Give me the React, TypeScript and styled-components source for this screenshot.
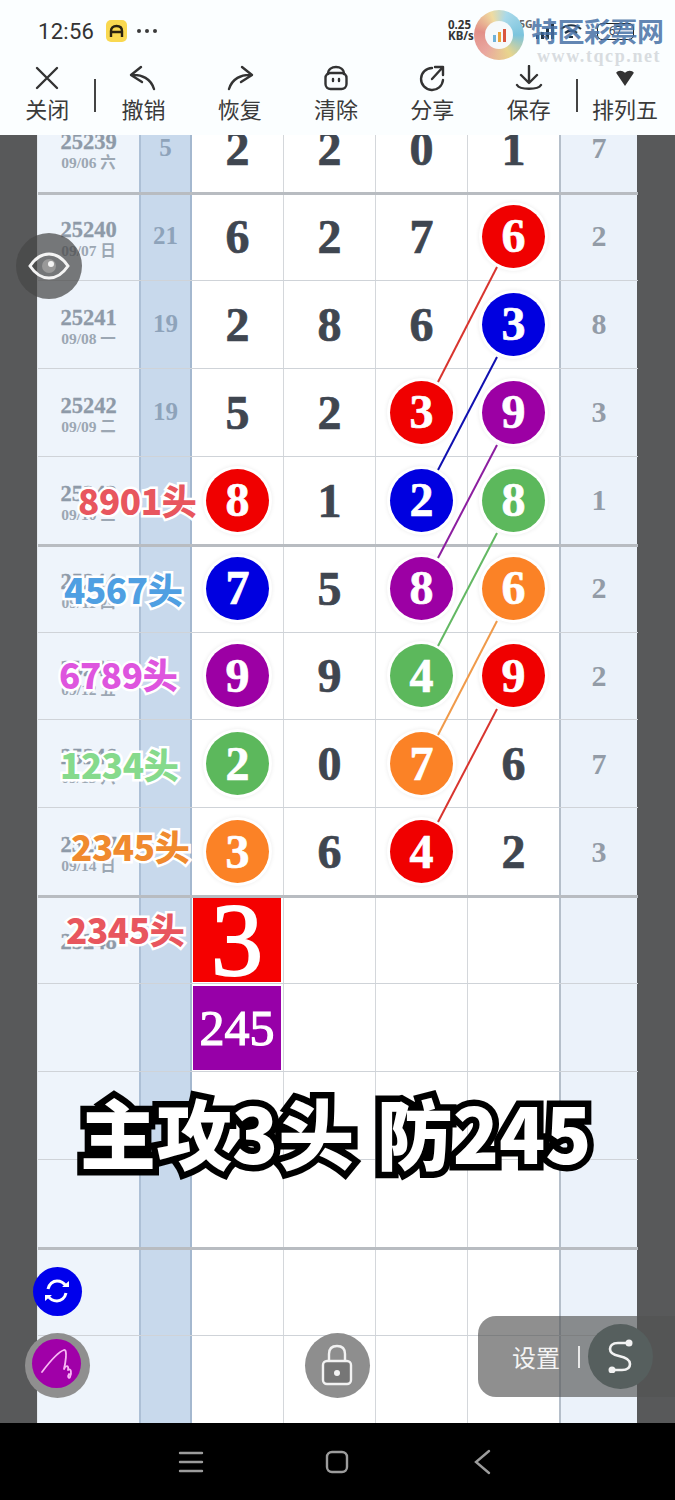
import React from "react";
import styled, { createGlobalStyle } from "styled-components";

const COLS = "101px 53px 92px 92px 92px 93px 76px";
const SERIF = `"Liberation Serif", "Noto Sans CJK SC", serif`;
const SANS = `"Noto Sans CJK SC", "Noto Sans", sans-serif`;

const Global = createGlobalStyle`
  html, body { margin: 0; padding: 0; background: #fff; }
  #root { width: 675px; height: 1500px; }
`;

const Page = styled.div`
  position: relative; width: 675px; height: 1500px; overflow: hidden;
  display: flex; flex-direction: column; font-family: ${SANS};
`;
const Top = styled.header`
  height: 135px; flex: none; background: #fbfeff; display: flex; flex-direction: column;
  position: relative; z-index: 3;
`;
const StatusBar = styled.div`
  height: 62px; flex: none; display: flex; align-items: center; padding-left: 38px; color: #333;
`;
const Clock = styled.span`
  font: 400 22px Roboto, sans-serif; letter-spacing: .3px; width: 68px;
`;
const AppBadge = styled.span`
  width: 21px; height: 22px; border-radius: 5px; background: #f9d850; display: flex;
  align-items: center; justify-content: center;
`;
const Dots = styled.span`
  margin-left: 10px; display: flex; gap: 4px;
  i { width: 4px; height: 4px; border-radius: 50%; background: #3a3a3a; }
`;
const StatusRight = styled.div`
  margin-left: auto; margin-right: 41px; display: flex; align-items: center; color: #333;
`;
const Speed = styled.span`
  font: 700 11.5px/11px "Noto Sans", sans-serif; width: 30px; color: #333; margin-top: -2px;
`;
const Net = styled.span`
  font: 700 10.5px "Noto Sans", sans-serif; color: #666; margin-left: ${p => p.$gap}px; margin-top: -14px; width: 15px;
`;
const SignalGap = styled.span`
  width: 2px;
`;
const WifiGap = styled.span`
  width: 14px;
`;
const Battery = styled.span`
  width: 35px; height: 15px; border: 1.5px solid #222; border-radius: 5px;
  font: 400 12px/15px Roboto, sans-serif; text-align: center; color: #345;
`;
const Logo = styled.div`
  position: absolute; left: 474px; top: 10px; width: 50px; height: 50px; border-radius: 50%;
  background: conic-gradient(from 20deg, #a9d9ea, #7cc4dd 70deg, #e8d58d 130deg, #e9a79f 200deg, #e28f88 260deg, #f0dba0 320deg, #a9d9ea);
  display: flex; align-items: center; justify-content: center;
`;
const LogoCore = styled.div`
  width: 28px; height: 28px; border-radius: 50%; background: #f6f9fb; display: flex;
  align-items: flex-end; justify-content: center; gap: 2px; padding-bottom: 7px; box-sizing: border-box;
  i { width: 3px; background: #e9a43c; }
  i:nth-child(1) { height: 7px; background: #6fb2d8; }
  i:nth-child(2) { height: 10px; }
  i:nth-child(3) { height: 13px; background: #d9553f; }
`;
const MarkTitle = styled.div`
  position: absolute; left: 531px; top: 16px; font: 700 27px/30px ${SANS}; color: rgba(70,112,165,.85);
  white-space: nowrap; letter-spacing: -.5px;
`;
const MarkUrl = styled.div`
  position: absolute; left: 537px; top: 46px; font: 700 18px/20px ${SERIF}; color: #d8dce0; letter-spacing: 1.6px;
`;
const ToolBar = styled.nav`
  flex: 1; display: flex; align-items: flex-start; margin-left: -1px;
`;
const ToolItem = styled.div`
  width: 96.3px; flex: none; display: flex; flex-direction: column; align-items: center; color: #333;
`;
const IconBox = styled.span`
  height: 30px; display: flex; align-items: center; justify-content: center; margin-top: 1px;
`;
const ToolText = styled.span`
  font: 400 22px/30px ${SANS}; color: #3a3a3a;
`;
const ToolDivider = styled.i`
  width: 2px; height: 33px; background: #444; margin: 17px -1px 0; flex: none;
`;
const Sheet = styled.main`
  flex: 1; background: #58595a; padding: 0 37px 0 37px; overflow: hidden; position: relative;
`;
const Table = styled.div`
  margin-top: -30px; border-left: 1px solid #e4e9ee;
`;
const Row = styled.div`
  display: grid; grid-template-columns: ${COLS}; height: 87.93px; box-sizing: border-box; position: relative;
  z-index: ${p => (p.$thick ? 1 : 0)};
  border-bottom: 1px solid ${p => (p.$thick ? "#b8bcc1" : "#cfd3d8")};
  box-shadow: ${p => (p.$thick ? "0 2px 0 #b8bcc1" : "none")};
`;
const Info = styled.div`
  background: #eef4fb; display: flex; flex-direction: column; align-items: center; justify-content: center;
  font-family: ${SERIF}; padding-top: 5px; box-sizing: border-box;
`;
const Issue = styled.span`
  font: 700 22.5px/24px ${SERIF}; color: #8e9aa8; -webkit-text-stroke: .3px #8e9aa8;
`;
const DateText = styled.span`
  font: 700 15.5px/18px ${SERIF}, ${SANS}; color: #9ca7b3;
`;
const Sum = styled.div`
  background: #c8d9ec; border-left: 2px solid #adc0d6; border-right: 2px solid #a4b8cf; box-sizing: border-box;
  display: flex; align-items: center; justify-content: center;
  font: 700 25px ${SERIF}; color: #8ea3ba;
`;
const Digit = styled.div`
  background: #fff; border-right: ${p => (p.$last ? "2px solid #b5bfca" : "1px solid #d4d7db")};
  box-sizing: border-box; display: flex; align-items: center; justify-content: center; position: relative;
  font: 700 48px ${SERIF}; color: #3f4650; -webkit-text-stroke: .7px #3f4650;
`;
const Ball = styled.span`
  width: 63px; height: 63px; border-radius: 50%; background: ${p => p.$color}; color: #fff;
  box-shadow: 0 0 0 3px #fff, 0 0 4px 3px rgba(0,0,0,.08);
  display: flex; align-items: center; justify-content: center; font: 700 48px/1 ${SERIF};
  -webkit-text-stroke: .7px #fff; position: relative; z-index: 1;
`;
const Tile = styled.span`
  width: 88px; height: 84px; background: ${p => p.$color}; color: #fff; display: flex; align-items: center; justify-content: center;
  font: 400 ${p => p.$size}px/1 ${SERIF}; -webkit-text-stroke: ${p => p.$weight}px #fff; margin: 1px 0 0 -1px;
`;
const Tail = styled.div`
  background: #ebf2fa; display: flex; align-items: center; justify-content: center;
  font: 700 30px ${SERIF}; color: #939ca7;
`;
const Links = styled.svg`
  position: absolute; left: 0; top: 0; pointer-events: none; z-index: 1;
`;
const Label = styled.div`
  position: absolute; left: ${p => p.$x}px; top: ${p => p.$y}px; transform: translateY(-50%);
  font: 900 35px/1 ${SANS}; letter-spacing: -.4px; color: ${p => p.$color}; white-space: nowrap; z-index: 2;
  -webkit-text-stroke: 5px #fff; paint-order: stroke fill;
`;
const Headline = styled.div`
  position: absolute; left: 80px; top: 1131px; transform: translateY(-50%);
  font: 900 76px/1 ${SANS}; letter-spacing: 0; word-spacing: 5px; color: #fff; white-space: nowrap; z-index: 2;
  -webkit-text-stroke: 13px #000; paint-order: stroke fill;
`;
const Fab = styled.div`
  position: absolute; left: ${p => p.$x - p.$d / 2}px; top: ${p => p.$y - p.$d / 2}px;
  width: ${p => p.$d}px; height: ${p => p.$d}px; border-radius: 50%; background: ${p => p.$bg};
  display: flex; align-items: center; justify-content: center; z-index: 2;
`;
const SettingsPill = styled.div`
  position: absolute; left: 478px; top: 1316px; width: 197px; height: 81px; box-sizing: border-box; padding-left: 34px;
  border-radius: 18px 0 0 18px; background: rgba(83,83,83,.65); display: flex; align-items: center; z-index: 2; color: #fff;
`;
const SettingsText = styled.span`
  font: 400 24px/1 ${SANS}; color: #f4f4f4;
`;
const SettingsBar = styled.i`
  width: 2px; height: 22px; background: #e8e8e8; margin-left: 18px;
`;
const NavBar = styled.footer`
  height: 77px; flex: none; background: #000; display: flex; align-items: center; padding-left: 178px; gap: 121px;
  position: relative; z-index: 3;
`;

const ICON = { fill: "none", stroke: "#333", strokeWidth: 2.4, strokeLinecap: "round" as const, strokeLinejoin: "round" as const };
const tools = [
  { t: "关闭", d: <svg width="26" height="26" viewBox="0 0 26 26" {...ICON}><path d="M3 3l20 20M23 3L3 23" /></svg> },
  { t: "撤销", d: <svg width="28" height="26" viewBox="0 0 28 26" {...ICON}><path d="M12 2L2 10l11 7M2 10c11-1 20 4 23 14" /></svg>, div: true },
  { t: "恢复", d: <svg width="28" height="26" viewBox="0 0 28 26" {...ICON}><path d="M16 2l10 8-11 7M26 10C15 9 6 14 3 24" /></svg> },
  { t: "清除", d: <svg width="26" height="26" viewBox="0 0 26 26" {...ICON}><path d="M5 9c0-5 4-7 8-7s8 2 8 7" /><rect x="2.5" y="8" width="21" height="16" rx="5" /><path d="M10 14v2M16 14v2" /></svg> },
  { t: "分享", d: <svg width="28" height="28" viewBox="0 0 28 28" {...ICON}><path d="M14 4A11 11 0 1 0 25 16" /><path d="M14 15L25 3M17 3h8v8" /></svg> },
  { t: "保存", d: <svg width="28" height="26" viewBox="0 0 28 26" {...ICON}><path d="M14 1v16M6 10l8 8 8-8M2 20c3 5 21 5 24 0" /></svg> },
  { t: "排列五", d: <svg width="20" height="16" viewBox="0 0 22 18"><path d="M1 3c2-3 7-3 10 0 3-3 8-3 10 0l-10 15z" fill="#333" /></svg>, after: true },
];

type Cell = number | string | { c: string; n: number };
const R = "#f00000", B = "#0000e0", P = "#9c00a4", G = "#5cb85c", O = "#fb8226";
const b = (c: string, n: number) => ({ c, n });
const rows: { i: string; d?: string; s?: string; v: Cell[]; e?: string }[] = [
  { i: "25239", d: "09/06 六", s: "5", v: [2, 2, 0, 1], e: "7" },
  { i: "25240", d: "09/07 日", s: "21", v: [6, 2, 7, b(R, 6)], e: "2" },
  { i: "25241", d: "09/08 一", s: "19", v: [2, 8, 6, b(B, 3)], e: "8" },
  { i: "25242", d: "09/09 二", s: "19", v: [5, 2, b(R, 3), b(P, 9)], e: "3" },
  { i: "25243", d: "09/10 三", v: [b(R, 8), 1, b(B, 2), b(G, 8)], e: "1" },
  { i: "25244", d: "09/11 四", v: [b(B, 7), 5, b(P, 8), b(O, 6)], e: "2" },
  { i: "25245", d: "09/12 五", v: [b(P, 9), 9, b(G, 4), b(R, 9)], e: "2" },
  { i: "25246", d: "09/13 六", v: [b(G, 2), 0, b(O, 7), 6], e: "7" },
  { i: "25247", d: "09/14 日", v: [b(O, 3), 6, b(R, 4), 2], e: "3" },
  { i: "25248", v: ["tile3", "", "", ""] },
  { i: "", v: ["tile245", "", "", ""] },
  { i: "", v: ["", "", "", ""] },
  { i: "", v: ["", "", "", ""] },
  { i: "", v: ["", "", "", ""] },
  { i: "", v: ["", "", "", ""] },
];
const links = [
  ["#d8352f", 497, 267, 438, 382], ["#1010b0", 497, 357, 438, 470], ["#8c1ea0", 497, 445, 438, 558],
  ["#63b863", 497, 533, 438, 646], ["#f09a4a", 497, 621, 438, 735], ["#d8352f", 497, 709, 438, 822],
] as const;
const labels = [
  { t: "8901头", x: 78, y: 499, c: "#e8565e" },
  { t: "4567头", x: 64, y: 588, c: "#4f9fe2" },
  { t: "6789头", x: 59, y: 673, c: "#de55de" },
  { t: "1234头", x: 60, y: 763, c: "#86da8c" },
  { t: "2345头", x: 71, y: 845, c: "#f08a2e" },
  { t: "2345头", x: 66, y: 928, c: "#e8565e" },
];

function renderCell(c: Cell) {
  if (c === "tile3") return <Tile $color="#f50000" $size={104} $weight={2}>3</Tile>;
  if (c === "tile245") return <Tile $color="#9700a8" $size={50} $weight={1.2}>245</Tile>;
  if (typeof c === "object") return <Ball $color={c.c}>{c.n}</Ball>;
  return c;
}

export default function App() {
  return (
    <Page>
      <Global />
      <Top>
        <StatusBar>
          <Clock>12:56</Clock>
          <AppBadge>
            <svg width="15" height="14" viewBox="0 0 15 14" fill="none" stroke="#2a2210" strokeWidth="2.4"><path d="M2 13V7c0-3 2-5 5.500-5S13 4 13 7v6M2 8h11" /></svg>
          </AppBadge>
          <Dots><i /><i /><i /></Dots>
          <StatusRight>
            <Speed>0.25 KB/s</Speed>
            <Net $gap={1}>5G</Net>
            <Net $gap={25}>5G</Net>
            <SignalGap />
            <svg width="23" height="16" viewBox="0 0 23 16" fill="#234"><rect x="0" y="12" width="3" height="4" /><rect x="5" y="9" width="3" height="7" /><rect x="10" y="5" width="3" height="11" /><rect x="15" y="1" width="3" height="15" /></svg>
            <svg width="24" height="16" viewBox="0 0 24 16" fill="none" stroke="#234" strokeWidth="2.2"><path d="M2 6c6-5 14-5 20 0M6 10c4-3 8-3 12 0M10 14h4" /></svg>
            <WifiGap />
            <Battery>67</Battery>
          </StatusRight>
        </StatusBar>
        <ToolBar>
          {tools.map((t, i) => (
            <React.Fragment key={t.t}>
              {t.after && <ToolDivider />}
              <ToolItem>
                <IconBox>{t.d}</IconBox>
                <ToolText>{t.t}</ToolText>
              </ToolItem>
              {i === 0 && <ToolDivider />}
            </React.Fragment>
          ))}
        </ToolBar>
        <Logo><LogoCore><i /><i /><i /></LogoCore></Logo>
        <MarkTitle>特区彩票网</MarkTitle>
        <MarkUrl>www.tqcp.net</MarkUrl>
      </Top>
      <Sheet>
        <Table>
          {rows.map((r, i) => (
            <Row key={i} $thick={i % 4 === 0}>
              <Info>
                <Issue>{r.i}</Issue>
                {r.d && <DateText>{r.d}</DateText>}
              </Info>
              <Sum>{r.s}</Sum>
              {r.v.map((c, j) => <Digit key={j} $last={j === 3}>{renderCell(c)}</Digit>)}
              <Tail>{r.e}</Tail>
            </Row>
          ))}
        </Table>
      </Sheet>
      <NavBar>
        <svg width="26" height="24" viewBox="0 0 26 24" stroke="#9c9c9c" strokeWidth="2.400" strokeLinecap="round"><path d="M2 3h22M2 12h22M2 21h22" /></svg>
        <svg width="24" height="24" viewBox="0 0 24 24" fill="none" stroke="#9c9c9c" strokeWidth="2.400"><rect x="2" y="2" width="20" height="20" rx="5" /></svg>
        <svg width="26" height="26" viewBox="-3 0 26 26" fill="none" stroke="#9c9c9c" strokeWidth="2.400" strokeLinecap="round"><path d="M16 2L3 13l13 11" /></svg>
      </NavBar>

      <Links width="675" height="1500" viewBox="0 0 675 1500">
        {links.map(([c, x1, y1, x2, y2], i) => <line key={i} x1={x1} y1={y1} x2={x2} y2={y2} stroke={c} strokeWidth="2" />)}
      </Links>
      {labels.map((l, i) => <Label key={i} $x={l.x} $y={l.y} $color={l.c}>{l.t}</Label>)}
      <Headline>主攻3头 防245</Headline>

      <Fab $x={49} $y={266} $d={66} $bg="rgba(70,70,70,.72)">
        <svg width="42" height="30" viewBox="0 0 42 30" fill="none" stroke="#f4f4f4" strokeWidth="3"><path d="M2 15C8 6 14 3 21 3s13 3 19 12c-6 9-12 12-19 12S8 24 2 15z" /><circle cx="21" cy="15" r="7" fill="#999" stroke="none" /><circle cx="23" cy="13" r="3" fill="#f4f4f4" stroke="none" /></svg>
      </Fab>
      <Fab $x={57} $y={1291} $d={49} $bg="#0000ec">
        <svg width="28" height="26" viewBox="0 0 28 26" fill="none" stroke="#fff" strokeWidth="3"><path d="M5 11C6 6 10 3 14 3s7 2 9 5M23 15c-1 5-5 8-9 8s-7-2-9-5" /><path d="M19 9h7l0-6zM9 17H2l0 6z" fill="#fff" stroke="none" /></svg>
      </Fab>
      <Fab $x={57} $y={1365} $d={65} $bg="#8f8f8f">
        <Fab $x={32} $y={31} $d={49} $bg="#a000a8">
          <svg width="49" height="49" viewBox="0 0 49 49" fill="none" stroke="#f8b8f4" strokeWidth="1.800" strokeLinecap="round" strokeLinejoin="round"><path d="M10 33C16 25 26 13 32 11c4-1 1 15 0 19 2-4 5-4 4 1 3-2 4 2 2 7-1 2-3 0-1-3" /></svg>
        </Fab>
      </Fab>
      <Fab $x={337} $y={1365} $d={65} $bg="#8e8e8e">
        <svg width="32" height="42" viewBox="0 0 32 42" fill="none" stroke="#f2f2f2" strokeWidth="2.400"><path d="M8 17V10C8 5 11 2 16 2s8 3 8 8v7" /><rect x="2" y="17" width="28" height="23" rx="4" fill="#767676" /><circle cx="16" cy="29" r="3" fill="#f2f2f2" stroke="none" /></svg>
      </Fab>
      <SettingsPill>
        <SettingsText>设置</SettingsText>
        <SettingsBar />
      </SettingsPill>
      <Fab $x={620} $y={1356} $d={65} $bg="#565f5e">
        <svg width="26" height="34" viewBox="0 0 26 34" fill="none" stroke="#f2f2f2" strokeWidth="2.600" strokeLinecap="round"><path d="M21 4H11C5 4 3 7 3 10c0 4 4 6 9 7 5 1 11 3 11 8 0 4-3 6-8 6H5" /><circle cx="22" cy="4" r="3.500" fill="#f2f2f2" stroke="none" /><circle cx="5" cy="31" r="3.500" fill="#f2f2f2" stroke="none" /></svg>
      </Fab>
    </Page>
  );
}
